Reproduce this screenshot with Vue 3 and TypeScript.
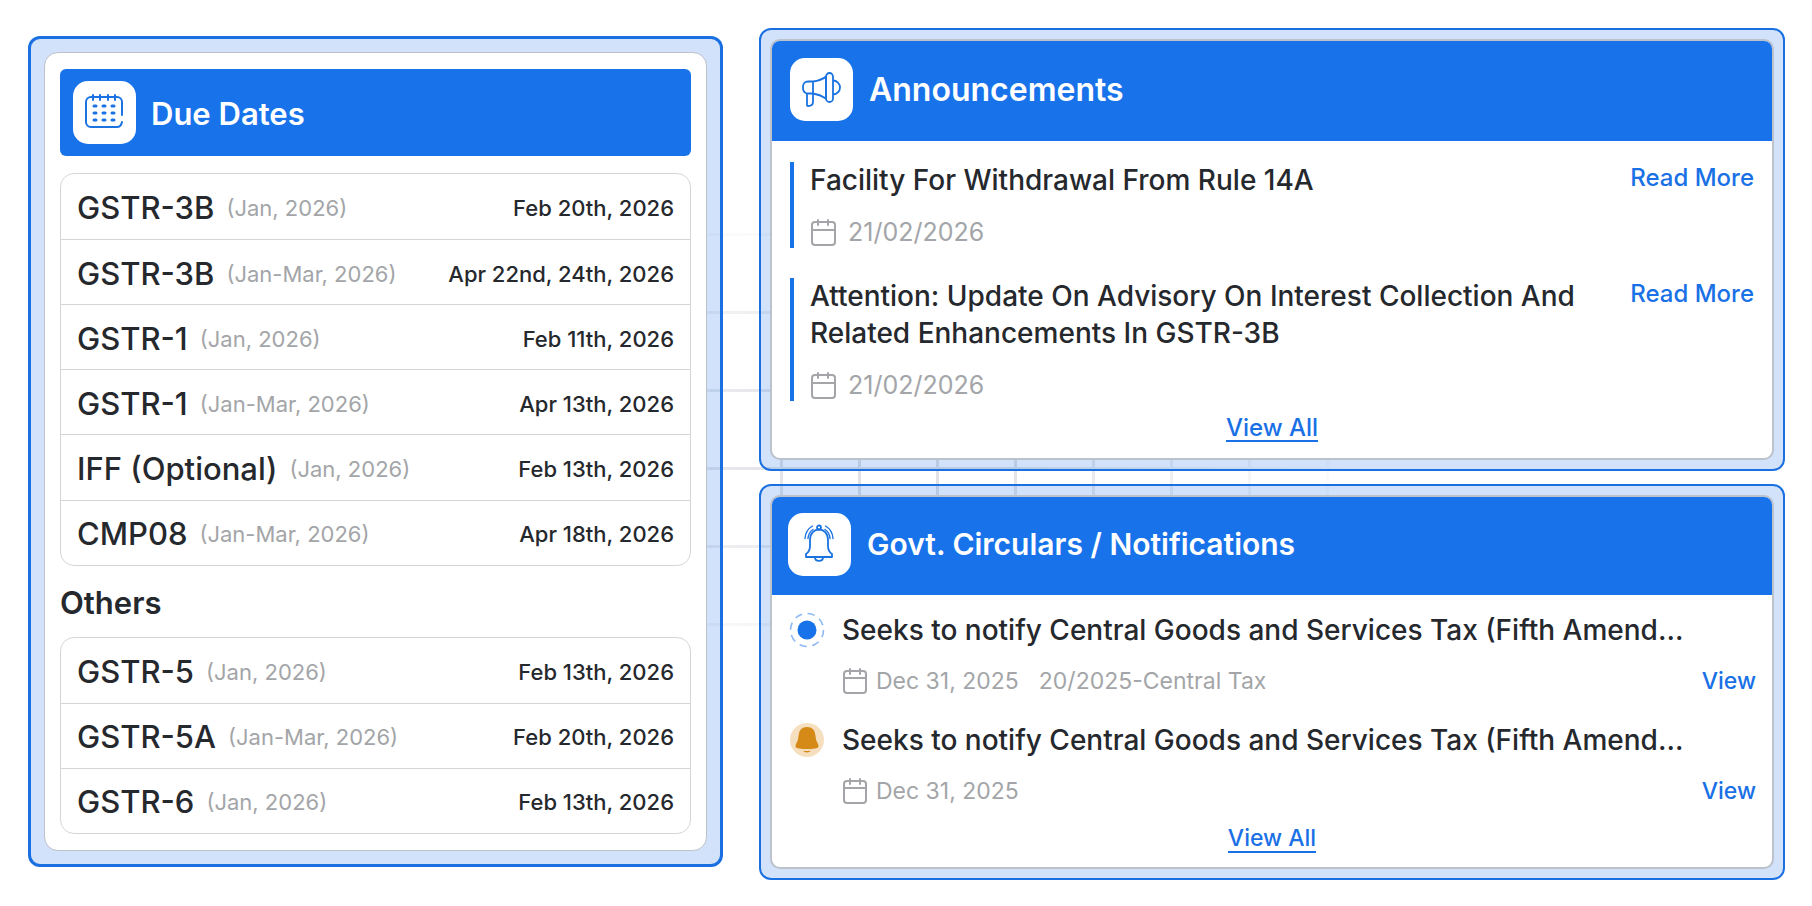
<script setup lang="ts">
interface DueDate {
  form: string
  period: string
  due: string
}

interface Announcement {
  title: string
  date: string
}

interface Circular {
  kind: 'pulse' | 'bell'
  title: string
  date: string
  reference?: string
}

const monthly: DueDate[] = [
  { form: 'GSTR-3B', period: '(Jan, 2026)', due: 'Feb 20th, 2026' },
  { form: 'GSTR-3B', period: '(Jan-Mar, 2026)', due: 'Apr 22nd, 24th, 2026' },
  { form: 'GSTR-1', period: '(Jan, 2026)', due: 'Feb 11th, 2026' },
  { form: 'GSTR-1', period: '(Jan-Mar, 2026)', due: 'Apr 13th, 2026' },
  { form: 'IFF (Optional)', period: '(Jan, 2026)', due: 'Feb 13th, 2026' },
  { form: 'CMP08', period: '(Jan-Mar, 2026)', due: 'Apr 18th, 2026' },
]

const others: DueDate[] = [
  { form: 'GSTR-5', period: '(Jan, 2026)', due: 'Feb 13th, 2026' },
  { form: 'GSTR-5A', period: '(Jan-Mar, 2026)', due: 'Feb 20th, 2026' },
  { form: 'GSTR-6', period: '(Jan, 2026)', due: 'Feb 13th, 2026' },
]

const announcements: Announcement[] = [
  { title: 'Facility For Withdrawal From Rule 14A', date: '21/02/2026' },
  {
    title: 'Attention: Update On Advisory On Interest Collection And Related Enhancements In GSTR-3B',
    date: '21/02/2026',
  },
]

const circulars: Circular[] = [
  {
    kind: 'pulse',
    title: 'Seeks to notify Central Goods and Services Tax (Fifth Amend...',
    date: 'Dec 31, 2025',
    reference: '20/2025-Central Tax',
  },
  {
    kind: 'bell',
    title: 'Seeks to notify Central Goods and Services Tax (Fifth Amend...',
    date: 'Dec 31, 2025',
  },
]
</script>

<template>
  <main class="board">
    <section class="frame frame-dates">
      <div class="panel panel-dates">
        <header class="bar bar-dates">
          <span class="tile">
            <svg width="40" height="38" viewBox="0 0 40 38" fill="none" stroke="#1a73e0" stroke-width="2" stroke-linecap="round">
              <path d="M37 21V8a5 5 0 0 0-5-5H6a5 5 0 0 0-5 5v20a5 5 0 0 0 5 5h26q4 0 5-5" />
              <path d="M8 1v5M15 1v5M23 1v5M30 1v5" />
              <path d="M9 12h2M18 12h2M27 12h2M9 19h2M18 19h2M27 19h2M9 26h2M18 26h2M27 26h2" stroke-width="3" />
            </svg>
          </span>
          <h2>Due Dates</h2>
        </header>
        <ul class="list list-monthly">
          <li v-for="(item, i) in monthly" :key="i">
            <span class="form">{{ item.form }}</span>
            <span class="period">{{ item.period }}</span>
            <span class="due">{{ item.due }}</span>
          </li>
        </ul>
        <h3>Others</h3>
        <ul class="list list-others">
          <li v-for="(item, i) in others" :key="i">
            <span class="form">{{ item.form }}</span>
            <span class="period">{{ item.period }}</span>
            <span class="due">{{ item.due }}</span>
          </li>
        </ul>
      </div>
    </section>

    <div class="column">
      <section class="frame frame-news">
        <div class="panel">
          <header class="bar bar-news">
            <span class="tile">
              <svg width="40" height="36" viewBox="0 0 40 36" fill="none" stroke="#1a73e0" stroke-width="1.8" stroke-linejoin="round">
                <path d="M11 9.500H6a5 5 0 0 0-5 5v2a5 5 0 0 0 5 5h5zM11 9.500q8-1 13-5v22q-6-4-13-5" />
                <rect x="24" y="1" width="7" height="29" rx="3.500" />
                <path d="M31 8.500a7 7 0 0 1 0 14M5 21.500v11.500q0 1 1 1 5 0 5-4v-8.500" />
              </svg>
            </span>
            <h2>Announcements</h2>
          </header>
          <div class="news">
            <article v-for="(item, i) in announcements" :key="i" class="news-item">
              <div class="news-text">
                <h4>{{ item.title }}</h4>
                <p class="date">
                  <svg width="26" height="28" viewBox="0 0 26 28" fill="none" stroke="#a3a5a8" stroke-width="2" stroke-linecap="round">
                    <rect x="2" y="4" width="23" height="23" rx="3" />
                    <path d="M2 12h23M8 2v5M18 2v5" />
                  </svg>
                  {{ item.date }}
                </p>
              </div>
              <a href="#announcement">Read More</a>
            </article>
          </div>
          <a class="all" href="#announcements">View All</a>
        </div>
      </section>

      <section class="frame frame-circulars">
        <div class="panel">
          <header class="bar bar-circulars">
            <span class="tile">
              <svg width="32" height="40" viewBox="0 0 32 40" fill="none" stroke="#1a73e0" stroke-width="1.8" stroke-linejoin="round" stroke-linecap="round">
                <path d="M6 16c0-14 18-14 18 0v6c0 4 1 6 4 8v3H2v-3c3-2 4-4 4-8z" />
                <circle cx="15" cy="3.500" r="2" />
                <path d="M11 33.500c0 4.500 8 4.500 8 0" />
                <path d="M1 14.500Q1.500 6 8.500 2M4 14.500Q4.500 8.500 9 5.500M29 14.500Q28.500 6 21.500 2M26 14.500Q25.500 8.500 21 5.500" stroke-width="1.400" />
              </svg>
            </span>
            <h2>Govt. Circulars / Notifications</h2>
          </header>
          <div class="circulars">
            <article v-for="(item, i) in circulars" :key="i" class="circular">
              <svg v-if="item.kind === 'pulse'" width="36" height="36" viewBox="0 0 36 36">
                <circle cx="18" cy="18" r="16.500" fill="none" stroke="#8db9f3" stroke-width="1.600" stroke-dasharray="7.400 5.560" />
                <circle cx="18" cy="18" r="9.500" fill="#1873eb" />
              </svg>
              <svg v-else width="36" height="36" viewBox="0 0 36 36">
                <circle cx="18" cy="18" r="17" fill="#f6dfbf" />
                <path d="M18 5q8 0 8.500 9 0 4 2.500 8 2 4-3 4.500-4 .5-8 .5t-8-.5q-5-.5-3-4.500 2.500-4 2.500-8Q10 5 18 5z" fill="#d58a18" />
                <path d="M14 28.500q4 1 8 0-1 2-4 2t-4-2z" fill="#d58a18" />
              </svg>
              <div class="circular-text">
                <h4>{{ item.title }}</h4>
                <div class="meta">
                  <p class="date">
                    <svg width="25" height="28" viewBox="0 0 25 28" fill="none" stroke="#a3a5a8" stroke-width="2" stroke-linecap="round">
                      <rect x="2" y="4" width="22" height="22" rx="3" />
                      <path d="M2 11h22M8 2v5M18 2v5" />
                    </svg>
                    {{ item.date }}
                  </p>
                  <span v-if="item.reference">{{ item.reference }}</span>
                  <a href="#circular">View</a>
                </div>
              </div>
            </article>
          </div>
          <a class="all all-circulars" href="#circulars">View All</a>
        </div>
      </section>
    </div>
  </main>
</template>

<style>
body {
  margin: 0;
  background: #fff;
}
</style>

<style scoped>
* {
  box-sizing: border-box;
}

.board {
  position: relative;
  isolation: isolate;
  display: grid;
  grid-template-columns: 695fr 1026fr;
  gap: 36px;
  min-height: 100vh;
  padding: 28px 27px 26px 28px;
  color: #25282d;
  font-family: Inter, "Liberation Sans", sans-serif;
  font-size: 24px;
  line-height: 32px;
}

/* faint square grid that fades out behind the cards */
.board::before {
  content: '';
  position: absolute;
  inset: 0;
  z-index: -1;
  background:
    repeating-linear-gradient(to right, #e0e2e6 0 3px, transparent 3px 78px),
    repeating-linear-gradient(to bottom, #e0e2e6 0 3px, transparent 3px 78px);
  background-position: 0 0, 0 77px;
  mask-image: radial-gradient(ellipse 480px 260px at 900px 445px, #000 20%, transparent);
}

h2,
h3,
h4,
p,
ul {
  margin: 0;
  padding: 0;
}

a {
  color: #1a70e5;
  font-weight: 450;
  text-decoration: none;
}

.frame {
  display: flex;
  padding: 9px;
  border: 2px solid #1a70e0;
  border-radius: 12px;
  background: rgba(24, 112, 230, 0.2);
}

.frame-dates {
  margin: 8px 0 13px;
  padding: 13px;
  border-width: 3px;
}

.panel {
  display: flex;
  flex: 1;
  flex-direction: column;
  min-width: 0;
  overflow: hidden;
  border: 2px solid #bcc1ca;
  border-radius: 10px;
  background: #fff;
}

.panel-dates {
  padding: 16px 15px;
  border-width: 1px;
  border-radius: 14px;
}

.bar {
  display: flex;
  align-items: center;
  gap: 16px;
  background: #1873eb;
  color: #fff;
}

.bar-dates {
  gap: 15px;
  padding: 12px 13px;
  border-radius: 6px;
}

.bar-dates h2 {
  padding-top: 3px;
}

.bar-news {
  padding: 17px 18px 20px;
}

.bar-circulars {
  padding: 16px 16px 19px;
}

.bar-circulars h2 {
  font-size: 30px;
}

.tile {
  display: grid;
  place-items: center;
  width: 63px;
  height: 63px;
  border-radius: 15px;
  background: #fff;
}

h2,
h3 {
  font-size: 32px;
  line-height: 40px;
  font-weight: 600;
}

.list {
  display: flex;
  flex-direction: column;
  border: 1px solid #d3d5d8;
  border-radius: 14px;
  list-style: none;
}

.list-monthly {
  flex: 6 1 auto;
  margin-top: 17px;
}

.list-others {
  flex: 3 1 auto;
}

.list li {
  display: flex;
  flex: 1;
  align-items: center;
  gap: 12px;
  min-height: 65px;
  padding: 3px 16px 0;
}

.list li + li {
  border-top: 1px solid #d3d5d8;
}

h3 {
  padding-top: 2px;
  margin: 15px 0 14px;
}

.bar-dates h2,
h3 {
  font-size: 31px;
}

.form {
  font-size: 31px;
  font-weight: 450;
}

.period {
  font-size: 22px;
  color: #a3a5a8;
}

.due {
  margin-left: auto;
  font-size: 22px;
  font-weight: 500;
}

.column {
  display: flex;
  flex-direction: column;
  gap: 13px;
  min-width: 0;
}

.frame-news {
  flex: 444 1 auto;
}

.frame-circulars {
  flex: 396 1 auto;
}

h4 {
  font-size: 28px;
  line-height: 37px;
  font-weight: 450;
}

.news {
  display: flex;
  flex-direction: column;
  gap: 30px;
  padding: 21px 18px 0;
}

.news-item {
  display: flex;
  justify-content: space-between;
  gap: 32px;
  padding-left: 16px;
  border-left: 4px solid #1873eb;
}

.news-item a {
  flex: none;
}

.date {
  display: flex;
  align-items: center;
  gap: 12px;
  color: #a3a5a8;
}

.news .date {
  margin-top: 17px;
  font-size: 25px;
}

.all {
  align-self: center;
  margin-top: 14px;
  border-bottom: 2px solid #1a70e5;
  line-height: 25px;
}

.all-circulars {
  margin-top: 19px;
  font-size: 23px;
}

.circulars {
  display: flex;
  flex-direction: column;
  gap: 25px;
  padding: 17px 16px 0 17px;
}

.circular {
  display: flex;
  gap: 17px;
}

.circular-text {
  flex: 1;
  min-width: 0;
}

.meta {
  display: flex;
  gap: 20px;
  margin-top: 16px;
  color: #a3a5a8;
  font-size: 23px;
}

.meta .date {
  gap: 9px;
}

.meta a {
  margin-left: auto;
}
</style>
